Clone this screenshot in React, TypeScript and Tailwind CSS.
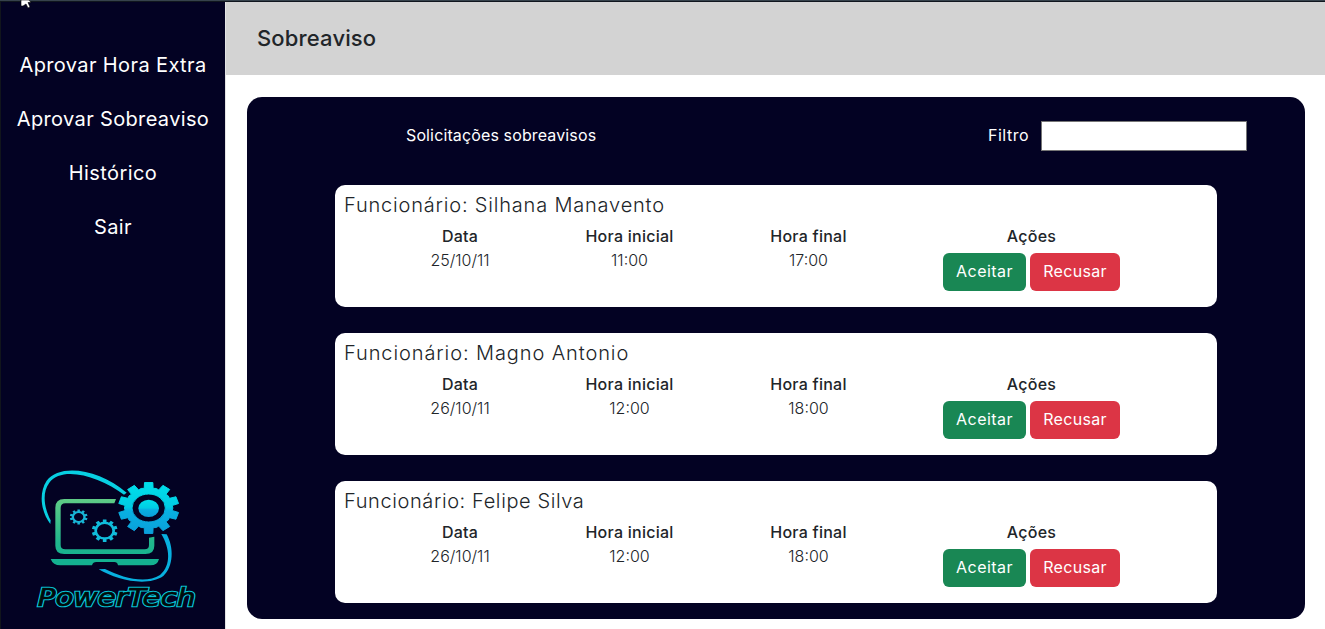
import React from "react";

type Request = { name: string; date: string; start: string; end: string; tracking: string };

const requests: Request[] = [
  { name: "Silhana Manavento", date: "25/10/11", start: "11:00", end: "17:00", tracking: "tracking-[0.81px]" },
  { name: "Magno Antonio", date: "26/10/11", start: "12:00", end: "18:00", tracking: "tracking-[0.9px]" },
  { name: "Felipe Silva", date: "26/10/11", start: "12:00", end: "18:00", tracking: "tracking-[0.6px]" },
];

function gearPath(cx: number, cy: number, rx: number, ry: number, root: number, teeth = 10) {
  const pts: string[] = [];
  const step = (Math.PI * 2) / teeth;
  for (let i = 0; i < teeth; i++) {
    const a = i * step - Math.PI / 2;
    const corners: [number, number][] = [
      [-0.3, root],
      [-0.22, 1],
      [0.22, 1],
      [0.3, root],
      [0.5, root + 0.02],
    ];
    for (const [o, r] of corners) {
      const t = a + o * step;
      pts.push(`${(cx + Math.cos(t) * rx * r).toFixed(1)} ${(cy + Math.sin(t) * ry * r).toFixed(1)}`);
    }
  }
  return `M${pts.join("L")}Z`;
}

function hole(cx: number, cy: number, rx: number, ry: number) {
  return `M${cx - rx} ${cy}a${rx} ${ry} 0 1 0 ${rx * 2} 0a${rx} ${ry} 0 1 0 ${-rx * 2} 0Z`;
}

function Logo() {
  return (
    <svg viewBox="0 0 555 495" className="ml-2 h-[165px] w-[185px]" role="img" aria-label="PowerTech">
      <defs>
        <linearGradient id="gear" x1="0" y1="0" x2="0" y2="1">
          <stop offset="0" stopColor="#00dfea" />
          <stop offset="0.48" stopColor="#00cce4" />
          <stop offset="0.56" stopColor="#08b0e2" />
          <stop offset="1" stopColor="#0a9fda" />
        </linearGradient>
        <linearGradient id="laptop" gradientUnits="userSpaceOnUse" x1="0" y1="117" x2="0" y2="316">
          <stop offset="0" stopColor="#5fcb86" />
          <stop offset="0.65" stopColor="#20b68c" />
          <stop offset="1" stopColor="#12b091" />
        </linearGradient>
      </defs>
      <path d="M76 192C48 155 40 100 65 62C105 8 225 28 305 98L297 104C225 50 112 15 73 68C50 98 58 145 77 181Z" fill="#08cfe2" />
      <path d="M409 222L425 223C447 262 446 320 415 348C366 382 275 360 221 328L240 327C292 353 362 373 405 345C440 315 434 264 409 222Z" fill="#08b0df" />
      <path d="M273 117L268 130H121Q107 130 107 144V255Q107 268 121 268H359Q372 268 372 255V233L388 230V257Q388 282 361 282H118Q91 282 91 257V143Q91 117 118 117Z" fill="url(#laptop)" />
      <path d="M77 297H402Q398 316 376 316H279Q277 306 268 306H214Q204 306 201 316H106Q84 316 77 297Z" fill="#14b190" />
      <path d={gearPath(371, 144, 91, 77, 0.78) + hole(371, 144, 50, 42)} fill="url(#gear)" fillRule="evenodd" stroke="url(#gear)" strokeWidth="3" strokeLinejoin="round" />
      <ellipse cx="371" cy="145" rx="31" ry="26" fill="url(#gear)" />
      <path d={gearPath(161, 171, 27, 23, 0.76) + hole(161, 171, 14, 12)} fill="#18b5d5" fillRule="evenodd" />
      <path d={gearPath(239, 212, 39, 34, 0.78) + hole(239, 212, 23, 20)} fill="#10bcdb" fillRule="evenodd" />
      <text
        x="38"
        y="439"
        textLength="474"
        lengthAdjust="spacingAndGlyphs"
        className="font-['DejaVu_Sans',sans-serif] text-[72px] italic"
        fill="none"
        stroke="#08c6d8"
        strokeWidth="8"
      >
        PowerTech
      </text>
      <text
        x="38"
        y="439"
        textLength="474"
        lengthAdjust="spacingAndGlyphs"
        className="font-['DejaVu_Sans',sans-serif] text-[72px] italic"
        fill="#000a0b"
        stroke="#000a0b"
        strokeWidth="2"
        aria-hidden="true"
      >
        PowerTech
      </text>
    </svg>
  );
}

function Column({ title, width, children }: { title: string; width: string; children: React.ReactNode }) {
  return (
    <div className={`${width} flex flex-col items-center`}>
      <span className="text-base leading-6 font-medium tracking-[0.25px]">{title}</span>
      {children}
    </div>
  );
}

function Card({ request }: { request: Request }) {
  return (
    <article className="h-[122px] rounded-[10px] bg-white px-[9px] pt-2 text-[#212529]">
      <h2 className={`h-[31px] text-xl leading-6 font-light ${request.tracking}`}>Funcionário: {request.name}</h2>
      <div className="flex pl-[41px] font-light">
        <Column title="Data" width="w-[150px]">
          <span className="text-base leading-6">{request.date}</span>
        </Column>
        <Column title="Hora inicial" width="w-[189px]">
          <span className="text-base leading-6">{request.start}</span>
        </Column>
        <Column title="Hora final" width="w-[169px]">
          <span className="text-base leading-6">{request.end}</span>
        </Column>
        <Column title="Ações" width="w-[277px]">
          <div className="mt-[5px] flex gap-1 text-base font-normal text-white">
            <button className="h-[38px] w-[83px] rounded-md bg-[#198754] pb-0.5 tracking-[0.45px]">Aceitar</button>
            <button className="h-[38px] w-[90px] rounded-md bg-[#dc3545] pb-0.5 tracking-[0.3px]">Recusar</button>
          </div>
        </Column>
      </div>
    </article>
  );
}

export default function App() {
  return (
    <div className="relative flex h-[629px] w-[1325px] flex-col overflow-hidden bg-white font-['Inter',sans-serif]">
      <div className="h-0.5 shrink-0 border-b border-[#10161e] bg-[#36424c]" />
      <div className="flex min-h-0 flex-1">
        <aside className="flex w-[226px] shrink-0 flex-col items-center justify-between border-r border-l border-r-[#e4e4e4] border-l-[#11151c] bg-[#030223] pt-12 pb-1 text-white">
          <nav className="flex flex-col items-center gap-6 text-xl leading-[30px]">
            <a className="tracking-[0.38px]">Aprovar Hora Extra</a>
            <a className="tracking-[0.35px]">Aprovar Sobreaviso</a>
            <a className="tracking-[0.4px]">Histórico</a>
            <a className="tracking-[0.4px]">Sair</a>
          </nav>
          <Logo />
        </aside>
        <div className="flex flex-1 flex-col">
          <header className="flex h-[73px] items-center bg-[#d3d3d3] pl-[31px]">
            <h1 className="text-[22px] font-medium tracking-[0.15px] text-[#212529]">Sobreaviso</h1>
          </header>
          <main className="mt-[22px] ml-[21px] h-[522px] w-[1058px] rounded-[15px] bg-[#030223] pt-6 pr-[58px] pl-[88px]">
            <div className="flex h-[30px] items-center text-base text-white">
              <span className="ml-[71px] pb-0.5 tracking-[0.13px]">Solicitações sobreavisos</span>
              <label className="ml-auto flex items-center gap-3">
                <span className="pb-0.5 tracking-[0.5px]">Filtro</span>
                <input className="h-[30px] w-[206px] border border-[#767676] bg-white px-1 text-black" />
              </label>
            </div>
            <section className="mt-[34px] flex w-[882px] flex-col gap-[26px]">
              {requests.map((request) => (
                <Card key={request.name} request={request} />
              ))}
            </section>
          </main>
        </div>
      </div>
      <svg className="absolute top-0 left-5 h-2 w-3" viewBox="0 0 12 8" aria-hidden="true">
        <path d="M1 0H9L11 2.5H8L10 7L8 8L6 4L3 6H1Z" fill="#fff" stroke="#000" strokeWidth="0.6" />
      </svg>
    </div>
  );
}
